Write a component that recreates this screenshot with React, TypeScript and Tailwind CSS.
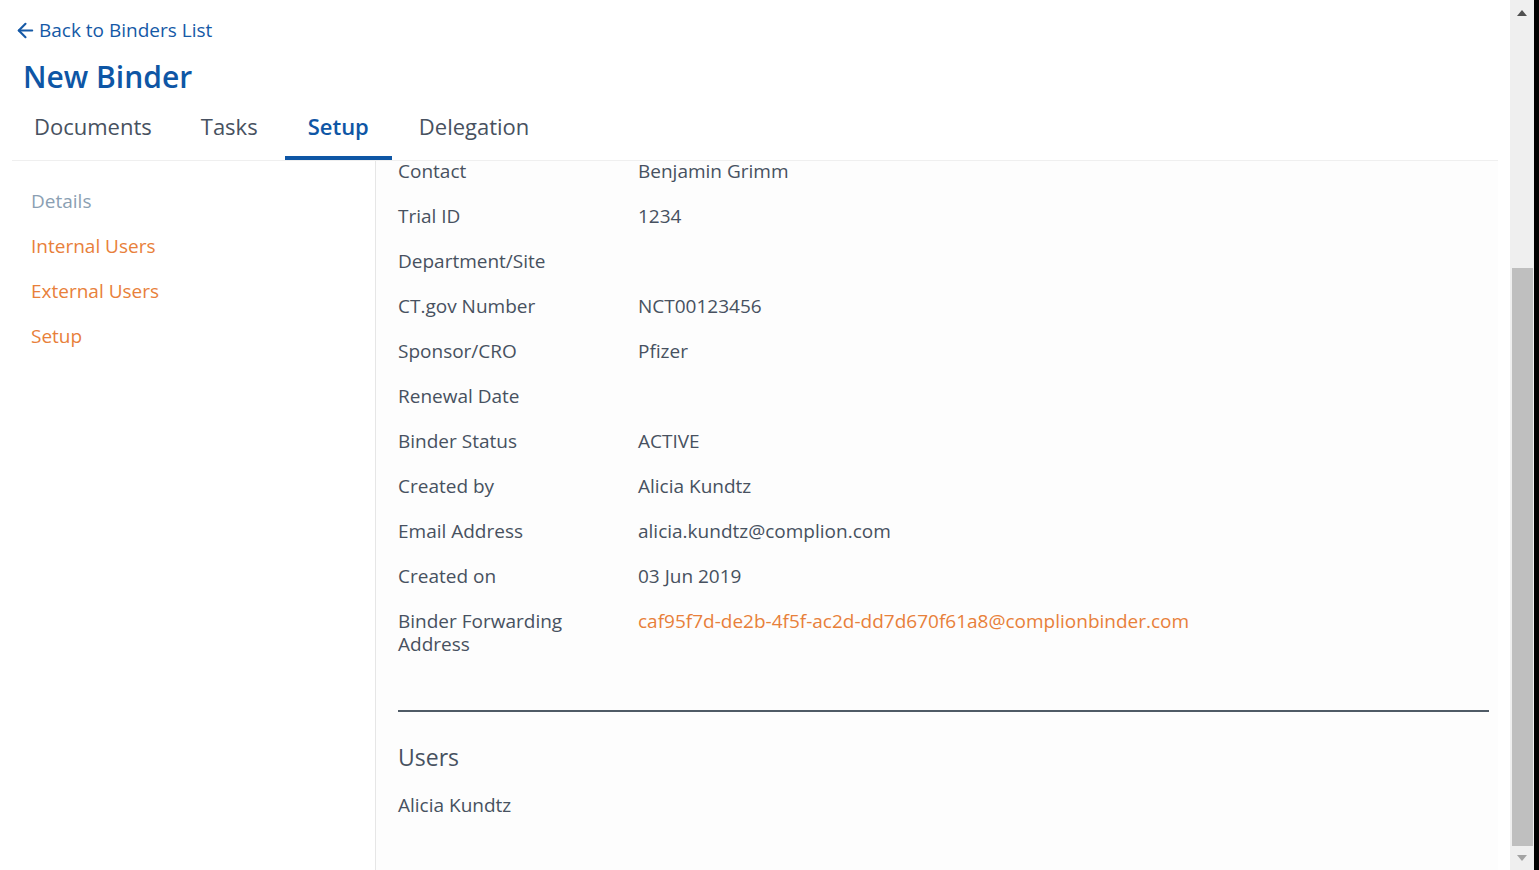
import { ArrowLeft } from 'lucide-react';

const tabs = ['Documents', 'Tasks', 'Setup', 'Delegation'];
const sideNav = [
  { label: 'Details', active: true },
  { label: 'Internal Users', active: false },
  { label: 'External Users', active: false },
  { label: 'Setup', active: false },
];

const details: { label: string; value: string; link?: boolean }[] = [
  { label: 'Binder Name', value: 'New Binder' },
  { label: 'Protocol', value: 'PRT-001' },
  { label: 'Principal Investigator', value: 'Reed Richards' },
  { label: 'Contact', value: 'Benjamin Grimm' },
  { label: 'Trial ID', value: '1234' },
  { label: 'Department/Site', value: '' },
  { label: 'CT.gov Number', value: 'NCT00123456' },
  { label: 'Sponsor/CRO', value: 'Pfizer' },
  { label: 'Renewal Date', value: '' },
  { label: 'Binder Status', value: 'ACTIVE' },
  { label: 'Created by', value: 'Alicia Kundtz' },
  { label: 'Email Address', value: 'alicia.kundtz@complion.com' },
  { label: 'Created on', value: '03 Jun 2019' },
  {
    label: 'Binder Forwarding Address',
    value: 'caf95f7d-de2b-4f5f-ac2d-dd7d670f61a8@complionbinder.com',
    link: true,
  },
];

function FakeScrollbar() {
  return (
    <div className="flex h-full w-[24px] shrink-0 flex-col items-center bg-[#efefef]">
      <div className="flex h-[26px] items-center justify-center">
        <svg width="10" height="6" viewBox="0 0 10 6">
          <path d="M5 0 L10 6 L0 6 Z" fill="#505050" />
        </svg>
      </div>
      <div className="h-[242px] w-full shrink-0" />
      <div className="w-[21px] flex-1 bg-[#bfbfbf]" />
      <div className="flex h-[24px] items-center justify-center">
        <svg width="10" height="6" viewBox="0 0 10 6">
          <path d="M0 0 L10 0 L5 6 Z" fill="#a3a3a3" />
        </svg>
      </div>
    </div>
  );
}

export default function App() {
  return (
    <div
      className="flex h-screen w-full overflow-hidden bg-white font-medium text-[#475160]"
      style={{ fontFamily: '"Open Sans", "Noto Sans", sans-serif' }}
    >
      <div className="flex min-w-0 flex-1 flex-col px-[12px]">
        {/* Header */}
        <div className="pt-[18px]">
          <a className="flex items-center gap-[2px] pl-[2px] text-[19px] leading-[24px] text-[#1559a6]">
            <ArrowLeft size={23} strokeWidth={2.2} />
            <span>Back to Binders List</span>
          </a>
          <h1 className="mt-[17px] ml-[11px] text-[30px] leading-[36px] font-semibold text-[#0e56a5]">
            New Binder
          </h1>
          <div className="mt-[3px] flex gap-[5px] border-b border-[#efefef]">
            {tabs.map((t) =>
              t === 'Setup' ? (
                <div
                  key={t}
                  className="border-b-4 border-[#0e56a5] px-[23px] pt-[14px] pb-[16px] text-[22px] leading-[28px] font-semibold text-[#0e56a5]"
                >
                  {t}
                </div>
              ) : (
                <div
                  key={t}
                  className="border-b-4 border-transparent px-[22px] pt-[14px] pb-[16px] text-[22px] leading-[28px] text-[#475160]"
                >
                  {t}
                </div>
              )
            )}
          </div>
        </div>

        {/* Body */}
        <div className="flex min-h-0 flex-1">
          <nav className="w-[364px] shrink-0 border-r border-[#e6e6e6] pt-[18px] pl-[19px]">
            {sideNav.map((n) => (
              <div
                key={n.label}
                className={
                  n.active
                    ? 'py-[11px] text-[19px] leading-[23px] text-[#8b9fb3]'
                    : 'py-[11px] text-[19px] leading-[23px] text-[#e8803a]'
                }
              >
                {n.label}
              </div>
            ))}
          </nav>

          <main className="flex min-w-0 flex-1 flex-col justify-end overflow-hidden bg-[#fdfdfd] pr-[9px] pl-[22px] pb-[53px]">
            <div>
              {details.map((d) => (
                <div key={d.label} className="flex py-[11px] text-[19px] leading-[23px]">
                  <div className="w-[240px] shrink-0 pr-[20px]">{d.label}</div>
                  <div className={d.link ? 'text-[#e8803a]' : ''}>{d.value}</div>
                </div>
              ))}
            </div>
            <div className="mt-[43px] border-t-2 border-[#4f5b66]" />
            <h2 className="mt-[30px] text-[23px] leading-[30px]">Users</h2>
            <div className="mt-[22px] text-[19px] leading-[23px]">Alicia Kundtz</div>
          </main>
        </div>
      </div>
      <FakeScrollbar />
      <div className="h-full w-[5px] shrink-0 bg-black" />
    </div>
  );
}
